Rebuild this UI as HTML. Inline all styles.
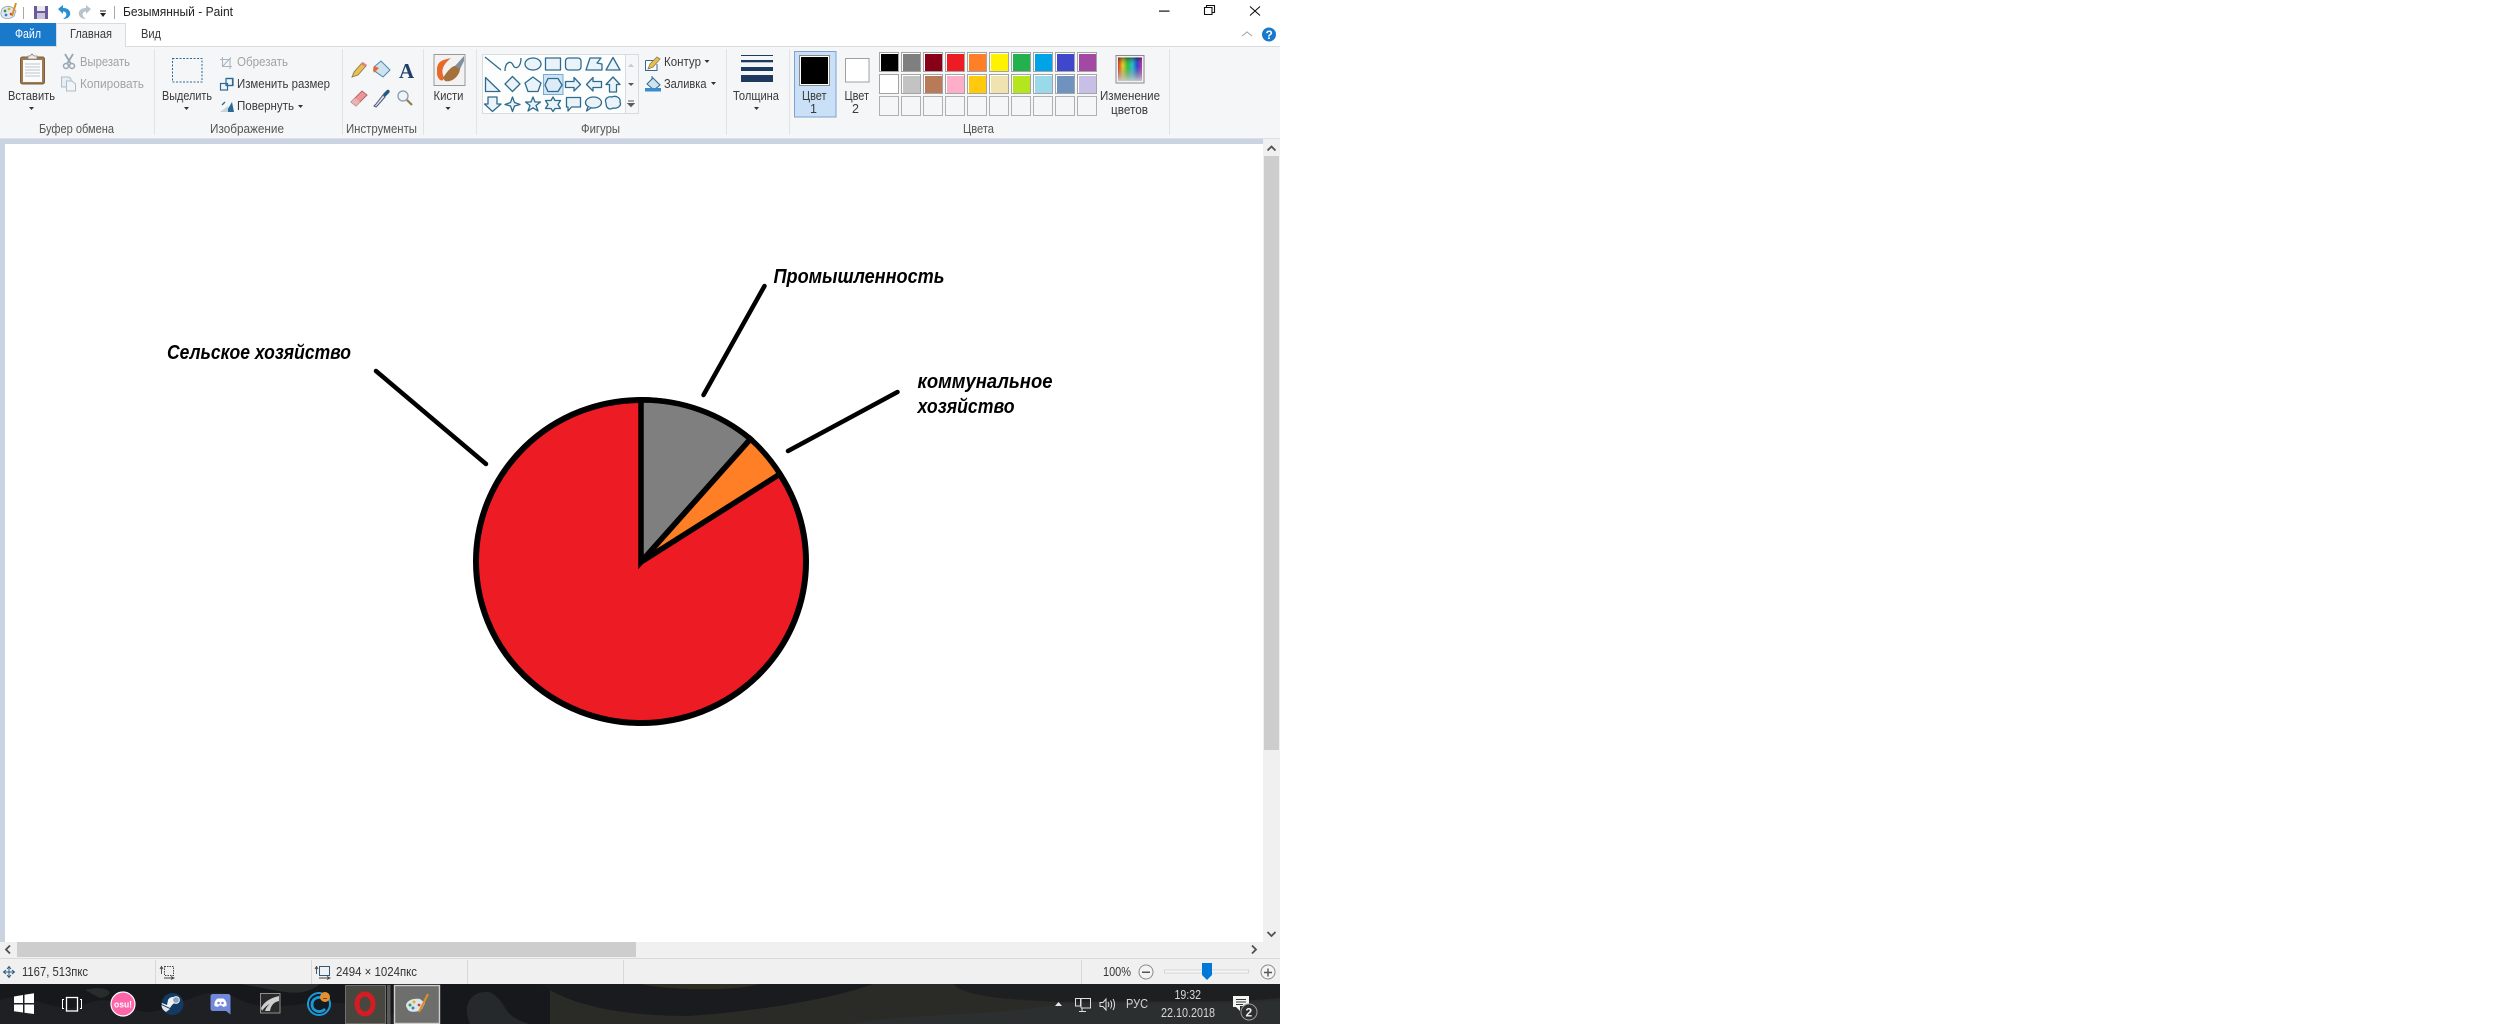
<!DOCTYPE html>
<html lang="ru"><head><meta charset="utf-8"><title>Безымянный - Paint</title>
<style>
html,body{margin:0;padding:0;background:#fff;width:2494px;height:1024px;overflow:hidden}
svg{display:block;position:absolute;left:0;top:0}
text{font-family:"Liberation Sans","Noto Sans CJK JP",sans-serif;font-size:12.5px;fill:#3b3b3b}
.d{fill:#a3a3a3}
.t{fill:#d8d8d8;font-size:12.5px}
.p{font-weight:bold;font-style:italic;font-size:20px;fill:#000}
.s{fill:#e9f3f9;stroke:#2f6b8c;stroke-width:1.3;stroke-linejoin:round}
.n{fill:none;stroke:#2f6b8c;stroke-width:1.3}
</style></head><body>
<svg width="2494" height="1024" viewBox="0 0 2494 1024" xmlns="http://www.w3.org/2000/svg">
<rect width="2494" height="1024" fill="#fff"/>

<!-- title bar -->
<g>
<path d="M1,12C2,6 9,5 13,8L16,11 14,16C11,19 3,20 1,15Z" fill="#dfe9ee" stroke="#8da6b0" stroke-width=".8"/>
<circle cx="5" cy="11" r="1.4" fill="#3a9a4a"/><circle cx="9" cy="9" r="1.4" fill="#e8b020"/><circle cx="6" cy="15" r="1.4" fill="#3a7ad0"/><circle cx="11" cy="14" r="1.3" fill="#d04040"/>
<path d="M16,3L12,16" stroke="#d9902a" stroke-width="2"/>
<rect x="23" y="7" width="1" height="12" fill="#a8a8a8"/>
<rect x="34" y="6" width="14" height="13" fill="#6a5a9a"/><rect x="37" y="6" width="8" height="5" fill="#e8e8ef"/><rect x="37" y="13" width="8" height="6" fill="#c8c4d8"/>
<path d="M58,9L63,5V8C69,8 71,12 70,15C69,18 66,19 63,19C66,17 67,15 66,13C65,11.500 64,11.500 63,11.500V14Z" fill="#2a8fd0"/>
<path d="M91,9L86,5V8C80,8 78,12 79,15C80,18 83,19 86,19C83,17 82,15 83,13C84,11.500 85,11.500 86,11.500V14Z" fill="#b8c4cc"/>
<rect x="100" y="10.500" width="6" height="1" fill="#222"/><path d="M100,13H106L103,17Z" fill="#222"/>
<rect x="114" y="6" width="1" height="13" fill="#a8a8a8"/>
<text x="123" y="16" textLength="110" lengthAdjust="spacingAndGlyphs" style="fill:#222">Безымянный - Paint</text>
<rect x="1159" y="10.500" width="10.500" height="1.200" fill="#111"/>
<path d="M1204.500,7.500H1212V14.500H1204.500ZM1206.500,7.500V5.500H1214.500V12.500H1212" fill="none" stroke="#111" stroke-width="1.100"/>
<path d="M1250,6.500L1260,15.500M1260,6.500L1250,15.500" stroke="#111" stroke-width="1.100"/>
</g>

<!-- tabs -->
<rect x="0" y="46" width="1280" height="92" fill="#f5f6f7"/>
<rect x="0" y="46" width="1280" height="1" fill="#dadbdc"/>
<rect x="0" y="23" width="56" height="23" fill="#1979ca"/>
<path d="M56.500,46.500V23.500H125.500V46.500" fill="#f5f6f7" stroke="#dadbdc"/>
<rect x="57" y="44" width="68" height="4" fill="#f5f6f7"/>
<text x="15" y="38" textLength="26" lengthAdjust="spacingAndGlyphs" style="fill:#fff">Файл</text>
<text x="70" y="38" textLength="42" lengthAdjust="spacingAndGlyphs">Главная</text>
<text x="141" y="38" textLength="20" lengthAdjust="spacingAndGlyphs">Вид</text>
<path d="M1242,36L1247,32 1252,36" fill="none" stroke="#a8a8a8" stroke-width="1.100"/>
<ellipse cx="1269" cy="34.500" rx="7" ry="7" fill="#1979ca"/>
<text x="1265.500" y="39" style="fill:#fff;font-weight:bold;font-size:12px">?</text>

<!-- ribbon separators -->
<g fill="#e2e3e4">
<rect x="154" y="49" width="1" height="86"/><rect x="342" y="49" width="1" height="86"/><rect x="423" y="49" width="1" height="86"/><rect x="476" y="49" width="1" height="86"/><rect x="726" y="49" width="1" height="86"/><rect x="789" y="49" width="1" height="86"/><rect x="1169" y="49" width="1" height="86"/>
</g>
<!-- group labels -->
<g>
<text x="39" y="133" textLength="75" lengthAdjust="spacingAndGlyphs" style="fill:#555">Буфер обмена</text>
<text x="210" y="133" textLength="74" lengthAdjust="spacingAndGlyphs" style="fill:#555">Изображение</text>
<text x="346" y="133" textLength="71" lengthAdjust="spacingAndGlyphs" style="fill:#555">Инструменты</text>
<text x="581" y="133" textLength="39" lengthAdjust="spacingAndGlyphs" style="fill:#555">Фигуры</text>
<text x="963" y="133" textLength="31" lengthAdjust="spacingAndGlyphs" style="fill:#555">Цвета</text>
</g>

<!-- clipboard group -->
<rect x="20.500" y="57" width="24" height="27" rx="2" fill="#a07a50" stroke="#7d5c38"/>
<rect x="23" y="60" width="19" height="22" fill="#fbfbfb"/>
<path d="M25,64H40M25,67H40M25,70H40M25,73H40M25,76H40" stroke="#b8c4d0"/>
<path d="M28,59V56H30L32,54 34,56H37V59Z" fill="#eee" stroke="#888" stroke-width=".8"/>
<text x="8" y="100" textLength="47" lengthAdjust="spacingAndGlyphs">Вставить</text>
<path d="M29,107H34L31.500,110Z" fill="#333"/>
<path d="M65,54L71,64M73,54L67,64" stroke="#98a6b4" stroke-width="1.800"/><circle cx="66" cy="66" r="2.500" fill="none" stroke="#98a6b4" stroke-width="1.500"/><circle cx="72" cy="66" r="2.500" fill="none" stroke="#98a6b4" stroke-width="1.500"/>
<text x="80" y="66" textLength="50" lengthAdjust="spacingAndGlyphs" class="d">Вырезать</text>
<path d="M61.500,77H69L71,79V87H61.500Z" fill="#e6edf3" stroke="#aebcc8"/><path d="M66.500,81H72L75.500,84V91H66.500Z" fill="#f1f5f8" stroke="#aebcc8"/>
<text x="80" y="88" textLength="64" lengthAdjust="spacingAndGlyphs" class="d">Копировать</text>

<!-- image group -->
<rect x="172.500" y="58.500" width="29.500" height="23.500" fill="none" stroke="#2a6a96" stroke-dasharray="2 1.500"/>
<text x="162" y="100" textLength="50" lengthAdjust="spacingAndGlyphs">Выделить</text>
<path d="M184,107H189L186.500,110Z" fill="#333"/>
<path d="M222.500,57V66.500H232M220,59.500H230V69M222.500,66.500L231,57.500" fill="none" stroke="#a9b6c0" stroke-width="1.100"/>
<text x="237" y="66" textLength="51" lengthAdjust="spacingAndGlyphs" class="d">Обрезать</text>
<path d="M226.500,78.500H232.500V85.500H225.500" fill="#f2f6f9" stroke="#2a6a96" stroke-width="1.200"/><rect x="220.500" y="83.500" width="7" height="6.500" fill="#f2f6f9" stroke="#2a6a96" stroke-width="1.200"/><rect x="226" y="78.500" width="7" height="7" fill="none" stroke="#2a6a96" stroke-width="1.200"/>
<text x="237" y="88" textLength="93" lengthAdjust="spacingAndGlyphs">Изменить размер</text>
<path d="M226,112L232,102 234,112Z" fill="#2a6a96"/><path d="M220,112L228,106V112Z" fill="#c8d4dc"/><path d="M222,105L225,102" stroke="#2a6a96" stroke-width="1.300"/>
<text x="237" y="110" textLength="57" lengthAdjust="spacingAndGlyphs">Повернуть</text>
<path d="M298,105H303L300.500,108Z" fill="#333"/>

<!-- tools -->
<path d="M352,77L354,72 362,63 366,66 358,75Z" fill="#e8c050" stroke="#8a7a50" stroke-width=".9"/><path d="M361,64L363,62 367,65 365,67Z" fill="#e08080"/>
<path d="M374,67L381,61 390,70 383,77 376,72Z" fill="#cfe2ef" stroke="#4a8aaf"/><path d="M374,66C372,70 374,74 375,72L379,68Z" fill="#e86a30"/>
<text x="399" y="78" style="font-family:'Liberation Serif',serif;font-weight:bold;font-size:21px;fill:#1f3f6a">A</text>
<path d="M351,102L362,91 367,95 356,106Z" fill="#ef9595" stroke="#b06a6a"/><path d="M351,102L355,98 360,102 356,106Z" fill="#e8b4b4"/>
<path d="M376,104L374,106 376,107 378,105 385,97 383,95Z" fill="#dceaf2" stroke="#557"/><path d="M383,94L387,90C390,89 390,92 389,93L385,97Z" fill="#1f5a86"/>
<circle cx="403" cy="96" r="5" fill="#eef5fa" stroke="#8a9aa8" stroke-width="1.300"/><path d="M407,100L412,105" stroke="#9a7a50" stroke-width="2.200"/>

<!-- brushes -->
<rect x="434" y="54.500" width="31" height="31" fill="#f2f2f2" stroke="#9a9a9a"/>
<path d="M437,70C437,60 444,60 451,58C445,63 441,68 443,75C446,83 438,82 437,74Z" fill="#e8692a"/>
<path d="M443,78C449,68 455,63 460,67C461,74 453,83 445,81Z" fill="#a4703c"/>
<path d="M455,66L464,56V61L460,69Z" fill="#8090a0"/>
<text x="433.500" y="100" textLength="30" lengthAdjust="spacingAndGlyphs">Кисти</text>
<path d="M445.500,107H450.500L448,110Z" fill="#333"/>

<!-- shapes gallery -->
<rect x="482.500" y="54.500" width="156" height="59" fill="#fcfdfd" stroke="#d9dcdf"/>
<rect x="625" y="55" width="13" height="58" fill="#f5f6f7"/>
<rect x="625" y="54" width="1" height="60" fill="#d9dcdf"/>
<rect x="543.500" y="74.500" width="19.500" height="20" fill="#cde4f7" stroke="#7da9d0"/>
<path d="M485,57L501,70" stroke="#2f6b8c" stroke-width="1.300"/>
<path d="M505,71C505,62 511,60 513,65C515,70 521,68 521,58" class="n"/>
<ellipse cx="533" cy="64" rx="8" ry="6" class="s"/>
<rect x="545.500" y="58" width="15" height="12" class="s"/>
<rect x="565.500" y="58" width="15.500" height="12" rx="3" class="s"/>
<path d="M586,70L590,58H601L597,63 602,64V70Z" class="s"/>
<path d="M613,57.500L620,70H606Z" class="s"/>
<path d="M485.500,77.500L500,91.500H485.500Z" class="s"/>
<path d="M512.500,76.500L520,84 512.500,91.500 505,84Z" class="s"/>
<path d="M533,77L541,83 538,91.500H528L525,83Z" class="s"/>
<path d="M548,78.500H558L562,85 558,91.500H548L545,85Z" class="s" style="fill:#dcebf7"/>
<path d="M565.500,81.500H574V77.500L580.500,84.500 574,91V87.500H565.500Z" class="s"/>
<path d="M601.500,81.500H593V77.500L586.500,84.500 593,91V87.500H601.500Z" class="s"/>
<path d="M613,77L620,84.500H616.500V92H609.500V84.500H606Z" class="s"/>
<path d="M488,97H497V104H501L492.500,111.500 484.500,104H488Z" class="s"/>
<path d="M512.500,97L514.500,102.500 520,104.500 514.500,106 512.500,111.500 510.500,106 505,104.500 510.500,102.500Z" class="s"/>
<path d="M533,97L535,102H540.500L536,105.500 538,111 533,107.800 528,111 530,105.500 525.500,102H531Z" class="s"/>
<path d="M553,97L555,100.500H560.500L558,104.500 560.500,108.500H555L553,111.500 551,108.500H545.500L548,104.500 545.500,100.500H551Z" class="s"/>
<path d="M566.500,97.500H580.500V107H571.500L568,111V107H566.500Z" class="s" style="stroke-linejoin:round"/>
<ellipse cx="593.500" cy="102.500" rx="8" ry="5.500" class="s"/><path d="M588,107L586.500,111 591,108" class="s"/>
<path d="M606,103C604,99 608,96 612,97C616,95 621,98 620,102C622,106 617,109 613,108C610,110 606,109 606,103Z" class="s"/>
<path d="M628,67L631,63.500 634,67Z" fill="#c8ccd0"/>
<path d="M628,83H634L631,86Z" fill="#5a5a5a"/>
<path d="M628,101H634M628,103.500H634L631,106.500Z" stroke="#5a5a5a" fill="#5a5a5a"/>

<!-- outline/fill -->
<path d="M645.500,60.500H656M645.500,60.500V70.500H657V64" fill="#fdfdfd" stroke="#2f6b8c"/>
<path d="M648,69L650,64 657,57 660,59 653,67Z" fill="#e8c050" stroke="#8a7a50" stroke-width=".8"/>
<text x="664" y="66" textLength="37" lengthAdjust="spacingAndGlyphs">Контур</text>
<path d="M704.500,60H709.500L707,63Z" fill="#333"/>
<path d="M647,84L653,78 660,85 654,90Z" fill="#cfe2ef" stroke="#2f6b8c"/><rect x="645" y="88" width="16" height="3.500" fill="#3a8ccc"/><path d="M652,79V76" stroke="#2f6b8c"/>
<text x="664" y="88" textLength="42.500" lengthAdjust="spacingAndGlyphs">Заливка</text>
<path d="M711,82H716L713.500,85Z" fill="#333"/>

<!-- thickness -->
<g fill="#1e3a5f">
<rect x="741" y="55" width="32" height="1"/><rect x="741" y="60" width="32" height="2.300"/><rect x="741" y="67" width="32" height="4"/><rect x="741" y="75" width="32" height="7"/>
</g>
<text x="733" y="100" textLength="46" lengthAdjust="spacingAndGlyphs">Толщина</text>
<path d="M754,107H759L756.500,110Z" fill="#333"/>

<!-- colors 1/2 -->
<rect x="794.500" y="51.500" width="41.500" height="65.500" fill="#c9e0f7" stroke="#7da2ce"/>
<rect x="799.500" y="55.500" width="30" height="30" fill="#fff" stroke="#8a8a8a"/>
<rect x="801" y="57" width="27" height="27" fill="#000"/>
<text x="802" y="100" textLength="24.500" lengthAdjust="spacingAndGlyphs">Цвет</text>
<text x="810" y="113">1</text>
<rect x="845.500" y="58.500" width="23.500" height="23.500" fill="#fff" stroke="#a0a0a0"/>
<text x="844.500" y="100" textLength="24.500" lengthAdjust="spacingAndGlyphs">Цвет</text>
<text x="852" y="113">2</text>

<!-- palette -->
<g stroke="#a4a4a4" fill="#fff">
<rect x="879.500" y="52.500" width="19" height="19"/><rect x="901.500" y="52.500" width="19" height="19"/><rect x="923.500" y="52.500" width="19" height="19"/><rect x="945.500" y="52.500" width="19" height="19"/><rect x="967.500" y="52.500" width="19" height="19"/><rect x="989.500" y="52.500" width="19" height="19"/><rect x="1011.500" y="52.500" width="19" height="19"/><rect x="1033.500" y="52.500" width="19" height="19"/><rect x="1055.500" y="52.500" width="19" height="19"/><rect x="1077.500" y="52.500" width="19" height="19"/>
<rect x="879.500" y="74.500" width="19" height="19"/><rect x="901.500" y="74.500" width="19" height="19"/><rect x="923.500" y="74.500" width="19" height="19"/><rect x="945.500" y="74.500" width="19" height="19"/><rect x="967.500" y="74.500" width="19" height="19"/><rect x="989.500" y="74.500" width="19" height="19"/><rect x="1011.500" y="74.500" width="19" height="19"/><rect x="1033.500" y="74.500" width="19" height="19"/><rect x="1055.500" y="74.500" width="19" height="19"/><rect x="1077.500" y="74.500" width="19" height="19"/>
</g>
<g stroke="#b0b0b0" fill="#f5f6f7">
<rect x="879.500" y="96.500" width="19" height="19"/><rect x="901.500" y="96.500" width="19" height="19"/><rect x="923.500" y="96.500" width="19" height="19"/><rect x="945.500" y="96.500" width="19" height="19"/><rect x="967.500" y="96.500" width="19" height="19"/><rect x="989.500" y="96.500" width="19" height="19"/><rect x="1011.500" y="96.500" width="19" height="19"/><rect x="1033.500" y="96.500" width="19" height="19"/><rect x="1055.500" y="96.500" width="19" height="19"/><rect x="1077.500" y="96.500" width="19" height="19"/>
</g>
<rect x="881" y="54" width="17" height="17" fill="#000"/><rect x="903" y="54" width="17" height="17" fill="#7f7f7f"/><rect x="925" y="54" width="17" height="17" fill="#880015"/><rect x="947" y="54" width="17" height="17" fill="#ed1c24"/><rect x="969" y="54" width="17" height="17" fill="#ff7f27"/><rect x="991" y="54" width="17" height="17" fill="#fff200"/><rect x="1013" y="54" width="17" height="17" fill="#22b14c"/><rect x="1035" y="54" width="17" height="17" fill="#00a2e8"/><rect x="1057" y="54" width="17" height="17" fill="#3f48cc"/><rect x="1079" y="54" width="17" height="17" fill="#a349a4"/>
<rect x="881" y="76" width="17" height="17" fill="#fff"/><rect x="903" y="76" width="17" height="17" fill="#c3c3c3"/><rect x="925" y="76" width="17" height="17" fill="#b97a57"/><rect x="947" y="76" width="17" height="17" fill="#ffaec9"/><rect x="969" y="76" width="17" height="17" fill="#ffc90e"/><rect x="991" y="76" width="17" height="17" fill="#efe4b0"/><rect x="1013" y="76" width="17" height="17" fill="#b5e61d"/><rect x="1035" y="76" width="17" height="17" fill="#99d9ea"/><rect x="1057" y="76" width="17" height="17" fill="#7092be"/><rect x="1079" y="76" width="17" height="17" fill="#c8bfe7"/>

<!-- rainbow -->
<defs>
<linearGradient id="rb" x1="0" x2="1" y1="0" y2="0"><stop offset="0" stop-color="#e03030"/><stop offset=".2" stop-color="#e8d020"/><stop offset=".4" stop-color="#30c040"/><stop offset=".6" stop-color="#20c0d0"/><stop offset=".8" stop-color="#3040d0"/><stop offset="1" stop-color="#c030b0"/></linearGradient>
<linearGradient id="rbv" x1="0" x2="0" y1="0" y2="1"><stop offset="0" stop-color="#000" stop-opacity=".45"/><stop offset=".35" stop-color="#888" stop-opacity="0"/><stop offset="1" stop-color="#ccc" stop-opacity=".95"/></linearGradient>
</defs>
<rect x="1116" y="55.500" width="28" height="27.500" fill="#f2f2f2" stroke="#8a8a8a"/>
<rect x="1118" y="57.500" width="24" height="23.500" fill="url(#rb)"/>
<rect x="1118" y="57.500" width="24" height="23.500" fill="url(#rbv)"/>
<text x="1100" y="100" textLength="60" lengthAdjust="spacingAndGlyphs">Изменение</text>
<text x="1111" y="114" textLength="37" lengthAdjust="spacingAndGlyphs">цветов</text>

<!-- canvas area -->
<rect x="0" y="138" width="1280" height="804" fill="#c9d3e2"/>
<rect x="0" y="138" width="1280" height="1" fill="#dcdfe3"/>
<rect x="5" y="144" width="1258" height="798" fill="#fff"/>
<!-- vertical scrollbar -->
<rect x="1263" y="139" width="17" height="803" fill="#f0f0f0"/>
<rect x="1264" y="156" width="15" height="594" fill="#cdcdcd"/>
<path d="M1267.500,150.500L1271.500,146.500 1275.500,150.500" fill="none" stroke="#505050" stroke-width="1.800"/>
<path d="M1267.500,932L1271.500,936 1275.500,932" fill="none" stroke="#505050" stroke-width="1.800"/>
<!-- horizontal scrollbar -->
<rect x="0" y="942" width="1280" height="16" fill="#f0f0f0"/>
<rect x="17" y="942" width="619" height="15" fill="#cdcdcd"/>
<path d="M10,945.500L6,949.500 10,953.500" fill="none" stroke="#505050" stroke-width="1.800"/>
<path d="M1252,945.500L1256,949.500 1252,953.500" fill="none" stroke="#505050" stroke-width="1.800"/>

<!-- picture -->
<ellipse cx="641" cy="561.500" rx="165" ry="161.500" fill="#ed1c24" stroke="#000" stroke-width="6"/>
<path d="M641,562L641,400A165,161.500 0 0 1 750.500,439Z" fill="#7f7f7f" stroke="#000" stroke-width="5.500" stroke-linejoin="miter"/>
<path d="M641,562L750.500,439A165,161.500 0 0 1 780,474Z" fill="#ff7f27" stroke="#000" stroke-width="5.500" stroke-linejoin="miter"/>
<path d="M376,371L486,464" stroke="#000" stroke-width="4.500" stroke-linecap="round"/>
<path d="M764.500,286L703.500,395" stroke="#000" stroke-width="4.500" stroke-linecap="round"/>
<path d="M897.500,392L788,451" stroke="#000" stroke-width="4.500" stroke-linecap="round"/>
<text class="p" x="167" y="359" textLength="184" lengthAdjust="spacingAndGlyphs">Сельское хозяйство</text>
<text class="p" x="773.500" y="283" textLength="171" lengthAdjust="spacingAndGlyphs">Промышленность</text>
<text class="p" x="917.500" y="388" textLength="135" lengthAdjust="spacingAndGlyphs">коммунальное</text>
<text class="p" x="917.500" y="413" textLength="97" lengthAdjust="spacingAndGlyphs">хозяйство</text>

<!-- status bar -->
<rect x="0" y="958" width="1280" height="26" fill="#f0f0f0"/>
<rect x="0" y="958" width="1280" height="1" fill="#d9d9d9"/>
<g fill="#d9d9d9"><rect x="155" y="960" width="1" height="24"/><rect x="311" y="960" width="1" height="24"/><rect x="467" y="960" width="1" height="24"/><rect x="623" y="960" width="1" height="24"/><rect x="1081" y="960" width="1" height="24"/></g>
<path d="M4,972H14M9,967V977M7,969L9,966.500 11,969M7,975L9,977.500 11,975M6,970L3.500,972 6,974M12,970L14.500,972 12,974" fill="none" stroke="#2a5a80" stroke-width="1"/>
<text x="22" y="976" textLength="66" lengthAdjust="spacingAndGlyphs" style="fill:#333">1167, 513пкс</text>
<rect x="164.500" y="966.500" width="9" height="9" fill="none" stroke="#444" stroke-dasharray="1.500 1"/>
<path d="M161.500,974V967M160,969L161.500,966.500 163,969M164,978H173M171,976.500L174,978 171,979.500" fill="none" stroke="#444" stroke-width=".9"/>
<rect x="319.500" y="966.500" width="10" height="9" fill="#f0f0f0" stroke="#2a5a80"/>
<path d="M316.500,974V967M315,969L316.500,966.500 318,969M319,978H329M327,976.500L330,978 327,979.500" fill="none" stroke="#444" stroke-width=".9"/>
<text x="336" y="976" textLength="81" lengthAdjust="spacingAndGlyphs" style="fill:#333">2494 × 1024пкс</text>
<text x="1103" y="976" textLength="28" lengthAdjust="spacingAndGlyphs" style="fill:#333">100%</text>
<circle cx="1146" cy="972" r="7" fill="#f4f4f4" stroke="#8a8a8a"/>
<rect x="1142" y="971.500" width="8" height="1.500" fill="#555"/>
<rect x="1164.500" y="970" width="84" height="3" fill="#f6f6f6" stroke="#d6d6d6"/>
<path d="M1202,963H1212V975L1207,980 1202,975Z" fill="#0078d7"/>
<circle cx="1268" cy="972" r="7" fill="#f4f4f4" stroke="#8a8a8a"/>
<path d="M1264,972.500H1272M1268,968.500V976.500" stroke="#555" stroke-width="1.400"/>

<!-- taskbar -->
<rect x="0" y="984" width="1280" height="40" fill="#2a2b27"/>
<rect x="0" y="984" width="550" height="40" fill="#16181c"/>
<path d="M0,1000C30,988 55,1018 85,1004 120,990 130,1020 160,1010 200,996 215,984 240,1000 280,1018 320,990 370,1010L440,1024H0Z" fill="#1e2023"/>
<path d="M240,984C280,990 300,1000 320,984ZM85,990C105,984 120,994 100,998Z" fill="#2a2c2c"/>
<path d="M470,1024C462,1006 470,990 490,992 510,1004 500,1016 530,1024Z" fill="#25292b"/>
<path d="M540,984C570,1005 620,1016 688,1016 750,1012 830,1000 873,984Z" fill="#191b1e"/>
<path d="M640,984C670,990 730,992 760,984Z" fill="#2d2d24"/>
<path d="M953,984C965,998 1020,1000 1060,1002 1140,1000 1220,1004 1280,998V984Z" fill="#1d1f21"/>
<path d="M850,1024C900,1014 1000,1016 1060,1004 1140,1002 1220,1006 1280,1000V1024Z" fill="#2b2f2f"/>

<!-- start -->
<path d="M14,996.500L23,995V1003H14ZM24.500,994.800L34,993.300V1003H24.500ZM14,1004.500H23V1012.500L14,1011.200ZM24.500,1004.500H34V1014L24.500,1012.800Z" fill="#fff"/>
<rect x="66.500" y="997.500" width="11" height="13.500" fill="none" stroke="#fff" stroke-width="1.300"/>
<path d="M64,999.500H62.500V1008.500H64M80,999.500H81.500V1008.500H80" fill="none" stroke="#fff"/>
<circle cx="123" cy="1004" r="12" fill="#ff66aa" stroke="#fff" stroke-width="1.200"/>
<text x="114" y="1007.500" textLength="18" lengthAdjust="spacingAndGlyphs" style="fill:#fff;font-size:9px;font-weight:bold">osu!</text>
<circle cx="172.500" cy="1004" r="11" fill="#123a62"/>
<path d="M161.500,1004L170,1008C172,1004 176,1002 179,1000 176,996 170,996 168,1000L167,1005 162,1003Z" fill="#eef2f6"/>
<circle cx="176" cy="1000" r="3.400" fill="#8da2b4" stroke="#eef2f6"/>
<path d="M161.500,1005L170,1009 166,1012C163,1010 161.500,1008 161.500,1005Z" fill="#dfe6ec"/>
<path d="M213,994H228C229.500,994 230.500,995 230.500,996.500V1014.500L226,1011H213C211.500,1011 210.500,1010 210.500,1008.500V996.500C210.500,995 211.500,994 213,994Z" fill="#7289da"/>
<path d="M214.500,1006C214,1002 216,999 218,998.500H223C225,999 227,1002 226.500,1006L223,1007 222,1005.500H219L218,1007Z" fill="#fff"/>
<circle cx="218.500" cy="1003" r="1.300" fill="#7289da"/><circle cx="222.500" cy="1003" r="1.300" fill="#7289da"/>
<rect x="260.500" y="993.500" width="19.500" height="19.500" fill="#2a2a2a" stroke="#8f8f8f"/>
<path d="M261,1008C264,1002 270,998 279,996V1001C274,1002 271,1005 270,1011H265C266,1008 268,1005 270,1004 267,1005 264,1008 262,1011Z" fill="#cfcfcf"/>
<circle cx="319" cy="1004" r="11" fill="#121a22" stroke="#1a9ad8" stroke-width="2"/>
<path d="M325,999.500C320,995 312,998 312,1004.500 312,1011 320,1014 325,1009" fill="none" stroke="#1a9ad8" stroke-width="2.800"/>
<circle cx="325" cy="997" r="5" fill="#e89030"/><path d="M323,998.500H327" stroke="#5a3010" stroke-width=".8"/>
<rect x="345.500" y="985.500" width="40" height="38" fill="#47473f" stroke="#6f6f6f"/>
<rect x="387" y="985" width="3.500" height="39" fill="#5a5a56"/>
<ellipse cx="365" cy="1004" rx="8" ry="10" fill="none" stroke="#d41c22" stroke-width="5"/>
<rect x="394.500" y="985.500" width="45" height="38" fill="#6e6e6c" stroke="#cfcfcf" stroke-width="1.400"/>
<path d="M406,1006C406,1000 414,998 420,999L425,1003 422,1009C419,1012 411,1013 408,1010Z" fill="#dbe6ea"/>
<circle cx="410" cy="1005" r="1.500" fill="#3a9a4a"/><circle cx="414" cy="1002" r="1.500" fill="#e8b020"/><circle cx="413" cy="1008" r="1.500" fill="#3a7ad0"/><circle cx="419" cy="1005" r="1.400" fill="#d04040"/>
<path d="M428,994L419,1012" stroke="#d9902a" stroke-width="2.200"/>

<!-- tray -->
<path d="M1055,1006L1058.500,1002 1062,1006Z" fill="#e8e8e8"/>
<path d="M1081,998.500H1090.500V1008H1081M1081,998.500V1008M1075.500,998.500H1080.500V1006H1075.500ZM1082,1008V1011M1079,1011.500H1086" fill="none" stroke="#e0e0e0" stroke-width="1"/>
<path d="M1100,1002.500H1103L1106,999V1010L1103,1006.500H1100ZM1108,1002C1109,1003.500 1109,1005.500 1108,1007M1110.500,1000.500C1112,1003 1112,1006 1110.500,1008.500M1113,999C1115,1002 1115,1007 1113,1010" fill="none" stroke="#e0e0e0" stroke-width="1"/>
<text class="t" x="1126" y="1008" textLength="22" lengthAdjust="spacingAndGlyphs">РУС</text>
<text class="t" x="1174.500" y="999" textLength="26.500" lengthAdjust="spacingAndGlyphs">19:32</text>
<text class="t" x="1161" y="1017" textLength="54" lengthAdjust="spacingAndGlyphs">22.10.2018</text>
<path d="M1233,996H1249V1006H1240V1011L1236,1007H1233Z" fill="#f4f4f4"/>
<path d="M1236,999.500H1246M1236,1002H1246M1236,1004.500H1243" stroke="#333" stroke-width=".9"/>
<circle cx="1249" cy="1012" r="8" fill="#2c2f30" stroke="#9a9a9a"/>
<text x="1245.500" y="1016.500" style="fill:#f0f0f0;font-weight:bold;font-size:12px">2</text>
</svg>
</body></html>
